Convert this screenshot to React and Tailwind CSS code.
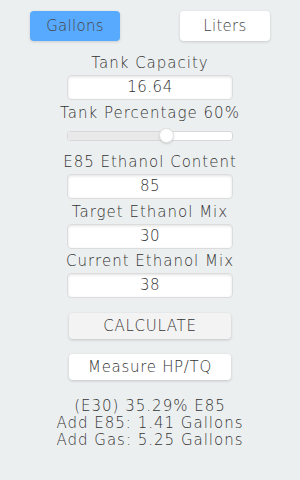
import React from "react";

const font = { fontFamily: '"DejaVu Sans", "Liberation Sans", sans-serif' };

function Field({ value }) {
  return (
    <div className="w-[166px] h-[25px] rounded-[4px] bg-white border border-[#dcdcdc] shadow-[inset_0_1px_3px_rgba(0,0,0,0.12)] flex items-center justify-center text-[15px] text-[#333] font-extralight tracking-[0.5px]">
      {value}
    </div>
  );
}

function Label({ children }) {
  return <div className="text-[15px] leading-[18px] text-[#333] font-extralight tracking-[1px]">{children}</div>;
}

export default function App() {
  return (
    <div className="w-[300px] h-[480px] bg-[#eceff0] flex flex-col items-center" style={font}>
      <div className="w-full flex justify-between px-[30px] pt-[11px]">
        <div className="w-[90px] h-[30px] rounded-[4px] bg-[#58aaff] shadow-[0_1px_3px_rgba(0,0,0,0.15)] flex items-center justify-center text-[15px] text-[#444] font-extralight tracking-[0.3px]">Gallons</div>
        <div className="w-[90px] h-[30px] rounded-[4px] bg-white shadow-[0_1px_3px_rgba(0,0,0,0.15)] flex items-center justify-center text-[15px] text-[#444] font-extralight tracking-[0.3px]">Liters</div>
      </div>
      <div className="mt-[13px]"><Label>Tank Capacity</Label></div>
      <div className="mt-[3px]"><Field value="16.64" /></div>
      <div className="mt-[4px]"><Label>Tank Percentage 60%</Label></div>
      <div className="mt-[9px] relative w-[166px] h-[10px] rounded-[3px] bg-white border border-[#d8d8d8]">
        <div className="absolute left-0 top-0 h-full w-[98px] bg-[#e9e9e9] rounded-l-[3px]" />
        <div className="absolute left-[91px] top-[-4px] w-[15px] h-[15px] rounded-full bg-white border border-[#e0e0e0] shadow-[0_1px_2px_rgba(0,0,0,0.15)]" />
      </div>
      <div className="mt-[12px]"><Label>E85 Ethanol Content</Label></div>
      <div className="mt-[3px]"><Field value="85" /></div>
      <div className="mt-[4px]"><Label>Target Ethanol Mix</Label></div>
      <div className="mt-[3px]"><Field value="30" /></div>
      <div className="mt-[3px]"><Label>Current Ethanol Mix</Label></div>
      <div className="mt-[3px]"><Field value="38" /></div>
      <div className="mt-[15px] w-[162px] h-[26px] rounded-[4px] bg-[#f3f3f3] shadow-[0_1px_3px_rgba(0,0,0,0.18)] flex items-center justify-center text-[15px] text-[#333] font-extralight tracking-[0.7px]">CALCULATE</div>
      <div className="mt-[15px] w-[162px] h-[26px] rounded-[4px] bg-white shadow-[0_1px_3px_rgba(0,0,0,0.18)] flex items-center justify-center text-[15px] text-[#333] font-extralight tracking-[0.7px]">Measure HP/TQ</div>
      <div className="mt-[18px] flex flex-col items-center text-[15px] leading-[17px] text-[#333] font-extralight tracking-[1px]">
        <div>(E30) 35.29% E85</div>
        <div>Add E85: 1.41 Gallons</div>
        <div>Add Gas: 5.25 Gallons</div>
      </div>
    </div>
  );
}
